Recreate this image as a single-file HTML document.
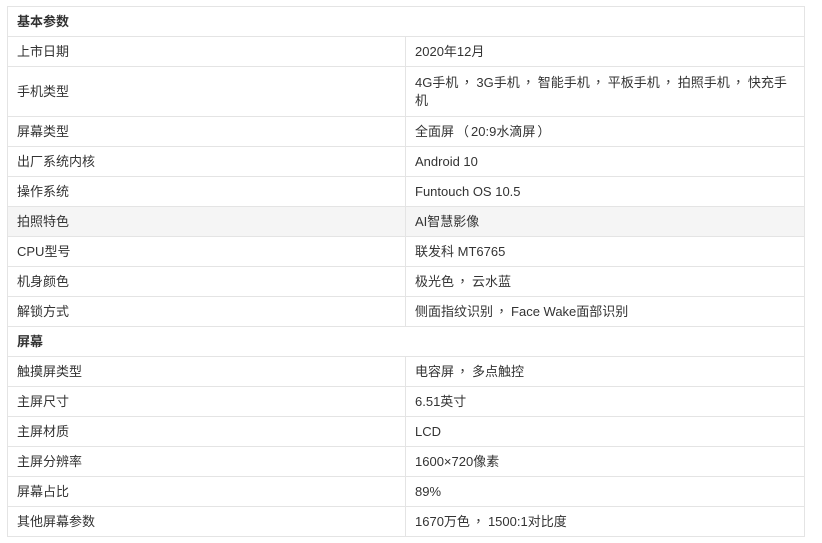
<!DOCTYPE html><html><head><meta charset="utf-8"><style>
body{margin:0;background:#fff;font-family:"Liberation Sans","Noto Sans CJK SC",sans-serif;font-size:13px;color:#333;}
.t{position:absolute;left:7px;top:6px;width:798px;border-collapse:collapse;}
.t td{border:1px solid #e4e4e4;height:29px;padding:0 9px;line-height:18px;vertical-align:middle;}
.t td.a{width:379px}
.t tr.h td{font-weight:bold;}
.t tr.g td{background:#f5f5f5}
.t tr.tall td{height:49px}
.c{font-family:"Noto Sans CJK TC",sans-serif;padding:0 3px 0 2px;}
.p{font-family:"Noto Sans CJK TC",sans-serif;padding:0 2px;}
</style></head><body>
<table class="t">
<tr class="h"><td colspan="2">基本参数</td></tr>
<tr><td class="a">上市日期</td><td>2020年12月</td></tr>
<tr class="tall"><td class="a">手机类型</td><td>4G手机<span class="c">，</span>3G手机<span class="c">，</span>智能手机<span class="c">，</span>平板手机<span class="c">，</span>拍照手机<span class="c">，</span>快充手<br>机</td></tr>
<tr><td class="a">屏幕类型</td><td>全面屏<span class="p">（</span>20:9水滴屏<span class="p">）</span></td></tr>
<tr><td class="a">出厂系统内核</td><td>Android 10</td></tr>
<tr><td class="a">操作系统</td><td>Funtouch OS 10.5</td></tr>
<tr class="g"><td class="a">拍照特色</td><td>AI智慧影像</td></tr>
<tr><td class="a">CPU型号</td><td>联发科 MT6765</td></tr>
<tr><td class="a">机身颜色</td><td>极光色<span class="c">，</span>云水蓝</td></tr>
<tr><td class="a">解锁方式</td><td>侧面指纹识别<span class="c">，</span>Face Wake面部识别</td></tr>
<tr class="h"><td colspan="2">屏幕</td></tr>
<tr><td class="a">触摸屏类型</td><td>电容屏<span class="c">，</span>多点触控</td></tr>
<tr><td class="a">主屏尺寸</td><td>6.51英寸</td></tr>
<tr><td class="a">主屏材质</td><td>LCD</td></tr>
<tr><td class="a">主屏分辨率</td><td>1600×720像素</td></tr>
<tr><td class="a">屏幕占比</td><td>89%</td></tr>
<tr><td class="a">其他屏幕参数</td><td>1670万色<span class="c">，</span>1500:1对比度</td></tr>
</table>
</body></html>
